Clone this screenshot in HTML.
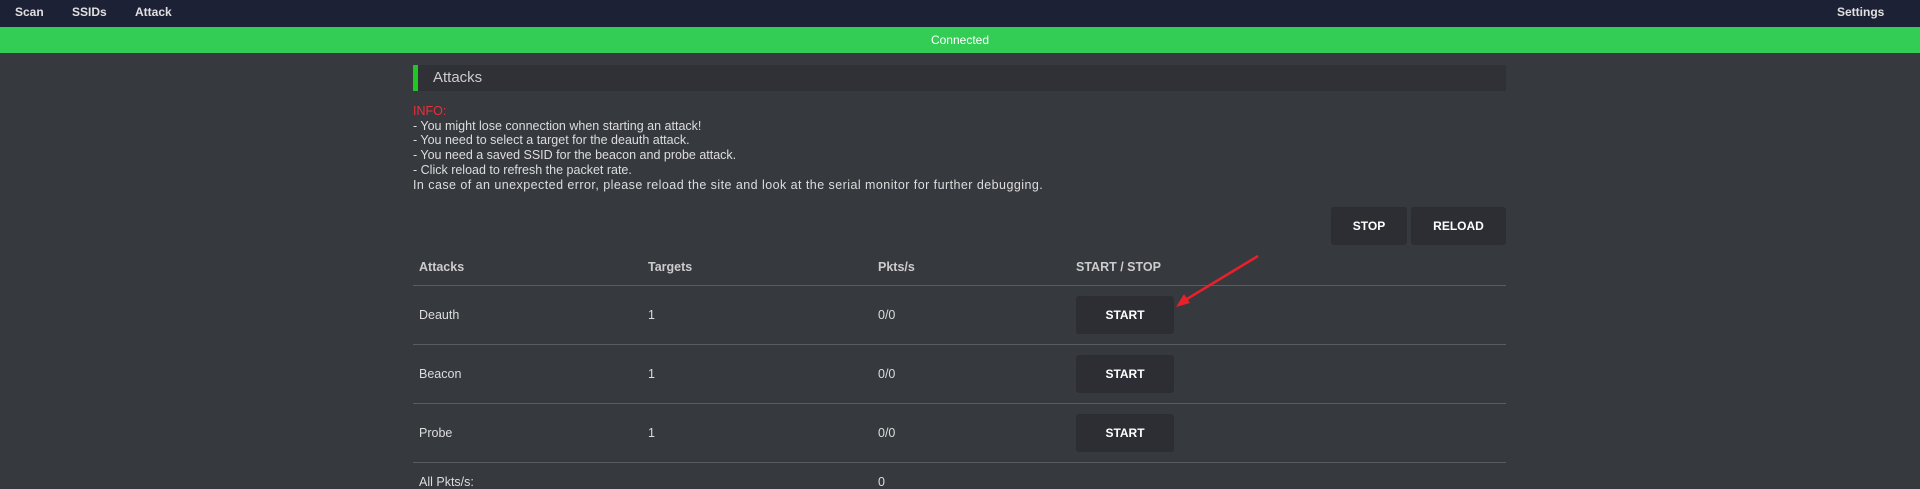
<!DOCTYPE html>
<html><head><style>
*{margin:0;padding:0;box-sizing:border-box}
body{width:1920px;height:486px;background:#36393e;font-family:"Liberation Sans",sans-serif;color:#ddd;position:relative;overflow:hidden}
.a{position:absolute;white-space:nowrap}
.nav{left:0;top:0;width:1920px;height:27px;background:#1d2136}
.nav span{position:absolute;top:5px;font-weight:bold;font-size:12px;color:#e0e0e0}
.green{left:0;top:27px;width:1920px;height:26px;background:#33cc55;color:#fff;font-size:12px;text-align:center;line-height:26px}
.hdr{left:413px;top:65px;width:1093px;height:26px;background:#2f3136;border-left:5px solid #21c721;font-size:15px;color:#ccc;line-height:26px;padding-left:15px}
.info{left:413px;top:104px;font-size:12.5px;line-height:14.7px;color:#ddd}
.btn{background:#2c2e33;border-radius:3px;color:#fff;font-weight:bold;font-size:12px;text-align:center}
.line{left:413px;width:1093px;height:1px;background:#5a5c60}
.t{font-size:12.5px;color:#ddd}
.th{font-weight:bold;color:#ccc}
</style></head><body>
<div class="a nav"><span style="left:15px">Scan</span><span style="left:72px">SSIDs</span><span style="left:135px">Attack</span><span style="left:1837px">Settings</span></div>
<div class="a green">Connected</div>
<div class="a hdr">Attacks</div>
<div class="a info"><span style="color:#e8323c">INFO:</span><br>- You might lose connection when starting an attack!<br>- You need to select a target for the deauth attack.<br>- You need a saved SSID for the beacon and probe attack.<br>- Click reload to refresh the packet rate.<br><span style="letter-spacing:0.45px">In case of an unexpected error, please reload the site and look at the serial monitor for further debugging.</span></div>
<div class="a btn" style="left:1331px;top:207px;width:76px;height:38px;line-height:38px">STOP</div>
<div class="a btn" style="left:1411px;top:207px;width:95px;height:38px;line-height:38px">RELOAD</div>
<div class="a t th" style="left:419px;top:260px">Attacks</div>
<div class="a t th" style="left:648px;top:260px">Targets</div>
<div class="a t th" style="left:878px;top:260px">Pkts/s</div>
<div class="a t th" style="left:1076px;top:260px">START / STOP</div>
<div class="a line" style="top:285px"></div>
<div class="a t" style="left:419px;top:308px">Deauth</div><div class="a t" style="left:648px;top:308px">1</div><div class="a t" style="left:878px;top:308px">0/0</div>
<div class="a btn" style="left:1076px;top:296px;width:98px;height:38px;line-height:38px">START</div>
<div class="a line" style="top:344px"></div>
<div class="a t" style="left:419px;top:367px">Beacon</div><div class="a t" style="left:648px;top:367px">1</div><div class="a t" style="left:878px;top:367px">0/0</div>
<div class="a btn" style="left:1076px;top:355px;width:98px;height:38px;line-height:38px">START</div>
<div class="a line" style="top:403px"></div>
<div class="a t" style="left:419px;top:426px">Probe</div><div class="a t" style="left:648px;top:426px">1</div><div class="a t" style="left:878px;top:426px">0/0</div>
<div class="a btn" style="left:1076px;top:414px;width:98px;height:38px;line-height:38px">START</div>
<div class="a line" style="top:462px"></div>
<div class="a t" style="left:419px;top:475px">All Pkts/s:</div><div class="a t" style="left:878px;top:475px">0</div>
<svg class="a" style="left:0;top:0" width="1920" height="486"><line x1="1258" y1="256" x2="1182" y2="302" stroke="#e8202a" stroke-width="2.5"/><polygon points="1176,307 1184,294 1190,303" fill="#e8202a"/></svg>
</body></html>
